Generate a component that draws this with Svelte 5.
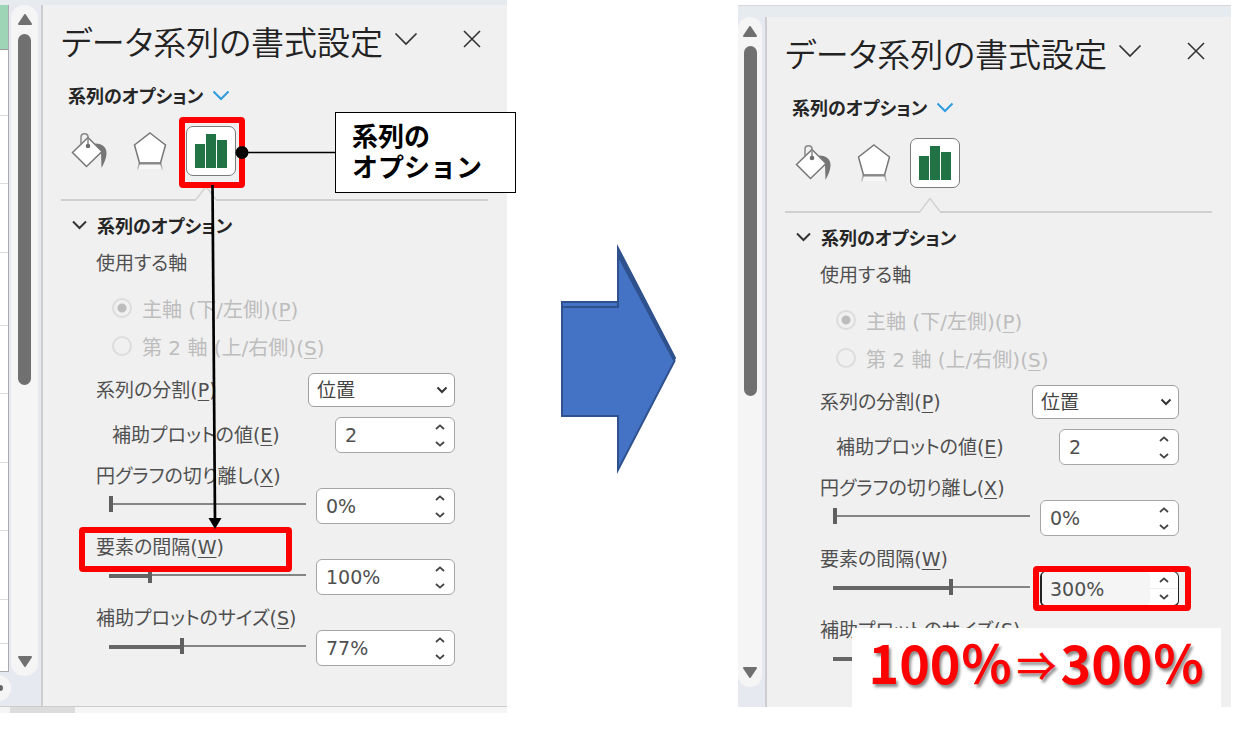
<script>
  const bands = [66, 68, 69, 73, 68, 69, 68, 69, 44, 28];

  const before = {
    id: 'before',
    sliders: [
      { name: '円グラフの切り離し', key: 'X', text: '0%', value: 0, min: 0, max: 400 },
      { name: '要素の間隔', key: 'W', text: '100%', value: 100, min: 0, max: 500, boxed: true },
      { name: '補助プロットのサイズ', key: 'S', text: '77%', value: 77, min: 5, max: 200 }
    ]
  };
  const after = {
    id: 'after',
    sliders: [
      { name: '円グラフの切り離し', key: 'X', text: '0%', value: 0, min: 0, max: 400 },
      { name: '要素の間隔', key: 'W', text: '300%', value: 300, min: 0, max: 500, active: true },
      { name: '補助プロットのサイズ', key: 'S', text: '77%', value: 77, min: 5, max: 200 }
    ]
  };
  const fill = (s) => ((s.value - s.min) / (s.max - s.min)) * 100;
</script>

{#snippet scrollbar()}
  <div class="scrollbar">
    <svg width="14" height="11" viewBox="0 0 14 11"><path d="M7 1 L13 10 H1 Z" fill="#707070" stroke="#707070" stroke-width="2" stroke-linejoin="round" /></svg>
    <div class="thumb"></div>
    <div class="rest"></div>
    <svg width="14" height="11" viewBox="0 0 14 11"><path d="M7 10 L13 1 H1 Z" fill="#707070" stroke="#707070" stroke-width="2" stroke-linejoin="round" /></svg>
  </div>
{/snippet}

{#snippet spinner(id, text, wide, active)}
  <div class="spin" class:wide class:active>
    <input {id} type="text" value={text} />
    <div class="steps">
      <button aria-label="増やす"><svg width="10" height="6" viewBox="0 0 10 6"><path d="M1 5 L5 1.4 L9 5" /></svg></button>
      <button aria-label="減らす"><svg width="10" height="6" viewBox="0 0 10 6"><path d="M1 1 L5 4.6 L9 1" /></svg></button>
    </div>
    {#if active}<span class="frame spin-frame"></span>{/if}
  </div>
{/snippet}

{#snippet pane(p)}
  <section class="pane">
    <header class="title">
      <h1>データ系列の書式設定</h1>
      <button aria-label="作業ウィンドウのオプション"><svg width="24" height="14" viewBox="0 0 24 14"><path d="M1.500 1.500 L12 12 L22.500 1.500" fill="none" stroke="#333" stroke-width="1.7" /></svg></button>
      <button class="close" aria-label="閉じる"><svg width="18" height="18" viewBox="0 0 18 18"><path d="M1 1 L17 17 M17 1 L1 17" fill="none" stroke="#333" stroke-width="1.6" /></svg></button>
    </header>

    <button class="scope">
      系列のオプション
      <svg width="18" height="11" viewBox="0 0 18 11"><path d="M1.500 1.500 L9 9 L16.500 1.500" fill="none" stroke="#2f9be0" stroke-width="2" /></svg>
    </button>

    <nav class="tabs">
      <button aria-label="塗りつぶしと線">
        <svg width="38" height="42" viewBox="0 0 38 42">
          <path d="M24 13.500 C32 13.500 36 18 35.500 24 C35.200 29 33 33 30.500 38 L30 22 Z" fill="#767676" />
          <path d="M1.500 22.500 L17 7.500 L31 21.500 L15.500 36.500 Z" fill="#fff" stroke="#777" stroke-width="1.5" />
          <path d="M10 15 V7 C10 2.500 17 2.500 17 7 V16" fill="none" stroke="#888" stroke-width="1.5" />
          <circle cx="17" cy="16" r="2.300" fill="#6d6d6d" />
        </svg>
      </button>
      <button aria-label="効果">
        <svg width="38" height="42" viewBox="0 0 38 42">
          <defs>
            <linearGradient id="fade-{p.id}" x1="0" y1="0" x2="0" y2="1">
              <stop offset="0" stop-color="#888" /><stop offset="1" stop-color="#ddd" />
            </linearGradient>
          </defs>
          <path d="M8.500 33 L6.500 40 M29.500 33 L31.500 40" stroke="url(#fade-{p.id})" stroke-width="1.5" />
          <path d="M9 34 H29 L30 39 H8 Z" fill="#f7f7f7" />
          <path d="M19 3 L34.500 15 L29.500 33 H8.500 L3.500 15 Z" fill="#fff" stroke="#777" stroke-width="1.5" />
          <path d="M8.500 33.500 H29.500" stroke="#888" stroke-width="2" />
        </svg>
      </button>
      <button class="current" aria-label="系列のオプション">
        <svg width="34" height="36" viewBox="0 0 34 36">
          <path d="M1 11 H11 V35 H1 Z M12 1 H22 V35 H12 Z M23 7 H33 V35 H23 Z" fill="#217346" />
        </svg>
        {#if p.id === 'before'}<span class="frame tab-frame"></span>{/if}
      </button>
    </nav>

    <div class="divider">
      <i class="lead"></i>
      <svg width="20" height="16" viewBox="0 0 20 16"><path d="M0 14.500 L10 1.500 L20 14.500" fill="none" stroke="#d2d2d2" stroke-width="1.5" /></svg>
      <i></i>
    </div>

    <button class="section">
      <svg width="15" height="10" viewBox="0 0 15 10"><path d="M1 1.500 L7.500 8 L14 1.500" fill="none" stroke="#333" stroke-width="2" /></svg>
      系列のオプション
    </button>

    <form>
      <fieldset disabled>
        <legend>使用する軸</legend>
        <label class="choice"><input type="radio" name="axis-{p.id}" checked /><span>主軸 (下/左側)(<u>P</u>)</span></label>
        <label class="choice"><input type="radio" name="axis-{p.id}" /><span>第 2 軸 (上/右側)(<u>S</u>)</span></label>
      </fieldset>

      <div class="row split">
        <label for="split-{p.id}">系列の分割(<u>P</u>)</label>
        <div class="pick">
          <select id="split-{p.id}"><option>位置</option></select>
          <svg width="12" height="8" viewBox="0 0 12 8"><path d="M1.500 1.500 L6 6 L10.500 1.500" /></svg>
        </div>
      </div>

      <div class="row plot">
        <label for="plot-{p.id}">補助プロットの値(<u>E</u>)</label>
        {@render spinner(`plot-${p.id}`, '2', false, false)}
      </div>

      {#each p.sliders as s}
        <div class="setting">
          <label for="{s.key}-{p.id}">{s.name}(<u>{s.key}</u>){#if s.boxed}<span class="frame label-frame"></span>{/if}</label>
          <div class="row">
            <input type="range" aria-label={s.name} min={s.min} max={s.max} value={s.value} style="--fill: {fill(s)}%" />
            {@render spinner(`${s.key}-${p.id}`, s.text, true, s.active)}
          </div>
        </div>
      {/each}
    </form>

    {#if p.id === 'before'}
      <svg class="pointer" width="300" height="384" viewBox="0 0 300 384">
        <path d="M12 6.500 H106" stroke="#000" stroke-width="1.3" />
        <circle cx="12" cy="6.500" r="6.500" fill="#000" />
        <path d="M-17.500 39 L-15 374" stroke="#000" stroke-width="2.700" />
        <path d="M-21.500 372 H-8.500 L-15 383 Z" fill="#000" />
      </svg>
      <p class="callout">系列の<br />オプション</p>
    {/if}
  </section>
{/snippet}

<main>
  <div class="shot left">
    <div class="ribbon"></div>
    <div class="body">
      <div class="edge">
        <div class="sheet">
          <div class="head"></div>
          {#each bands as h}<div class="cell" style="height: {h}px"></div>{/each}
        </div>
        <div class="knob"><i></i></div>
      </div>
      {@render scrollbar()}
      {@render pane(before)}
    </div>
    <div class="status"><i></i></div>
  </div>

  <div class="between">
    <svg width="118" height="232" viewBox="0 0 118 232">
      <g fill="#4472c4" stroke="#2f528f" stroke-width="2">
        <path d="M3 59 H59 V5 L116 115 L59 222 V172 H3 Z" stroke-miterlimit="8" />
        <path d="M3 64 H59 V12 L115.500 118 L59 227 V173 H3 Z" stroke-miterlimit="8" />
        <path d="M59 4 L116 114 L114 117 L59 14 Z" fill="#2f528f" stroke="none" />
      </g>
    </svg>
  </div>

  <div class="shot right">
    <div class="ribbon"></div>
    <div class="body">
      {@render scrollbar()}
      {@render pane(after)}
    </div>
    <p class="result">100％<span>⇒</span>300％</p>
  </div>
</main>

<style>
  :global(body) {
    margin: 0;
    background: #fff;
  }
  main {
    display: grid;
    grid-template-columns: 507fr 231fr 493fr;
    padding-right: 9px;
    align-items: start;
    font-family: 'DejaVu Sans', 'Noto Sans CJK JP', sans-serif;
    font-size: 19px;
    line-height: 24px;
    color: #505050;
    font-feature-settings: 'palt';
  }
  button, input, select {
    font: inherit;
    color: inherit;
    font-feature-settings: inherit;
    margin: 0;
    padding: 0;
    border: 0;
    background: none;
  }
  svg { display: block; flex: none; }
  u { text-underline-offset: 3px; text-decoration-thickness: 1px; }

  .shot { position: relative; background: #e6eaf0; min-width: 0; }
  .right { margin-top: 5px; }
  .ribbon { height: 5px; background: #e6ebf0; }
  .right .ribbon { height: 11px; border-top: 1px solid #d5d8dc; }
  .body { display: flex; align-items: stretch; }

  .edge { width: 11px; overflow: hidden; }
  .sheet { width: 8px; background: #fff; border-right: 1px solid #a9abae; }
  .head { height: 44px; background: #9fd5b7; border-bottom: 1px solid #999; }
  .cell { border-bottom: 1px solid #dcdcdc; box-sizing: border-box; }
  .cell:last-child { border-color: #a9abae; }
  .knob {
    width: 26px; height: 26px; margin: 3px 0 0 -15px;
    border-radius: 13px; background: #f5f5f5;
    display: flex; align-items: center; justify-content: flex-end;
  }
  .knob i { width: 6px; height: 6px; margin-right: 8px; border-radius: 3px; background: #666; }

  .scrollbar {
    width: 27px; box-sizing: border-box;
    margin: 0 3px 30px 0; padding: 9px 0;
    border-radius: 13px; background: #f5f5f5;
    display: flex; flex-direction: column; align-items: center;
  }
  .right .scrollbar { width: 24px; margin: 0 3px 20px 0; }
  .thumb { width: 13px; flex: 351; margin-top: 9px; border-radius: 7px; background: #707070; }
  .rest { flex: 271; }

  .pane {
    position: relative; flex: 1; min-width: 0;
    border-left: 2px solid #cbcdd0; background: #f0f0f0;
    padding-bottom: 40px;
  }
  .right .pane { padding-bottom: 29px; }

  .title { display: flex; align-items: center; height: 50px; padding: 11px 26px 1px 18px; }
  h1 {
    margin: 0; font-size: 33px; line-height: 50px; font-weight: 350; color: #222;
    font-family: 'Noto Sans CJK JP', sans-serif; white-space: nowrap;
  }
  .title button { margin-left: 11px; margin-bottom: 4px; }
  .title .close { margin-left: auto; }

  .scope, .section {
    display: flex; align-items: center;
    font-family: 'Noto Sans CJK JP', sans-serif;
    font-size: 18px; font-weight: 700; color: #262626;
  }
  .scope { height: 30px; margin: 13px 0 0 25px; gap: 9px; }
  .section { height: 28px; margin: 10px 0 0 29px; gap: 10px; }

  .tabs { display: flex; align-items: center; height: 50px; margin: 16px 0 0 28px; gap: 22px; }
  .tabs .current {
    position: relative; width: 50px; height: 50px; box-sizing: border-box;
    margin-left: -5px; border: 1px solid #7b7b7b; border-radius: 7px; background: #fff;
    display: flex; align-items: center; justify-content: center;
  }

  .divider { display: flex; align-items: flex-end; height: 16px; margin: 9px 19px 0 18px; }
  .divider i { flex: 1; height: 2px; background: #d0d0d0; }
  .divider .lead { flex: none; width: 135px; }

  form { margin: 10px 52px 0 53px; }
  fieldset { margin: 0; padding: 0; border: 0; }
  legend { padding: 0; line-height: 28px; margin-bottom: 14px; }
  .choice {
    display: flex; align-items: center; height: 38px; margin-left: 16px; gap: 10px;
    font-size: 20px; color: #bdbdbd;
  }
  .choice input {
    appearance: none; width: 20px; height: 20px; box-sizing: border-box;
    border: 2px solid #dcdcdc; border-radius: 10px; margin-bottom: 4px;
  }
  .choice input:checked { background: radial-gradient(circle, #bdbdbd 4px, transparent 5px); }

  .row { display: flex; align-items: center; justify-content: space-between; }
  .split { margin-top: 6px; }
  .plot { margin: 10px 0 0 16px; }
  label { white-space: nowrap; }

  .pick { position: relative; width: 147px; }
  select {
    appearance: none; display: block; width: 100%; height: 34px; box-sizing: border-box;
    padding-left: 8px; border: 1px solid #a0a0a0; border-radius: 6px; background: #fff; color: #444;
  }
  .pick svg { position: absolute; right: 7px; top: 13px; fill: none; stroke: #333; stroke-width: 2; pointer-events: none; }

  .spin {
    position: relative; display: flex; width: 120px; height: 36px; box-sizing: border-box;
    border: 1px solid #a6a6a6; border-radius: 6px; background: #fff;
  }
  .spin.wide { width: 139px; }
  .spin input { flex: 1; width: 0; padding-left: 9px; outline: none; }
  .steps { width: 28px; display: flex; flex-direction: column; }
  .steps button { flex: 1; display: flex; align-items: center; justify-content: center; }
  .steps path { fill: none; stroke: #444; stroke-width: 1.8; }
  .spin.active { border: 1px solid #222; border-left-width: 2px; border-bottom-width: 2px; }
  .active input { background: #f5f5f5; border-radius: 4px; padding-left: 8px; }
  .active .steps button:first-child { border-bottom: 1px solid #eee; }

  .setting { margin-top: 11px; }
  .setting > label { position: relative; display: table; height: 24px; }
  input[type='range'] {
    appearance: none; flex: 1; min-width: 0; height: 16px; margin: 0 10px 4px 13px;
    background:
      linear-gradient(#666, #666) 0 7px / var(--fill) 4px no-repeat,
      linear-gradient(#858585, #858585) 0 7px / 100% 2px no-repeat;
  }
  input[type='range']::-webkit-slider-runnable-track { height: 16px; }
  input[type='range']::-webkit-slider-thumb { appearance: none; width: 4px; height: 16px; background: #606060; }

  .frame { position: absolute; border: 6px solid #f00; border-radius: 4px; pointer-events: none; }
  .tab-frame { inset: -10px -10px -13px -8px; }
  .label-frame { inset: -8px -68px -13px -17px; }
  .spin-frame { inset: -6px -13px -6px -9px; }

  .pointer { position: absolute; left: 187px; top: 141px; overflow: visible; pointer-events: none; }
  .callout {
    position: absolute; left: 292px; top: 107px; width: 181px; height: 81px; box-sizing: border-box;
    margin: 0; padding: 6px 16px; border: 1px solid #000; background: #fff; color: #000;
    font: 700 26px/31px 'Noto Sans CJK JP', sans-serif; font-feature-settings: normal;
  }

  .status { height: 6px; border-top: 1px solid #ccc; background: #f5f5f5; }
  .status i { display: block; width: 65px; height: 6px; margin-left: 10px; background: #dcdcdc; }

  .between { display: flex; justify-content: center; padding: 243px 9px 0 0; }

  .result {
    position: absolute; right: 10px; bottom: 0; width: 369px; height: 79px; margin: 0;
    background: #fff; color: #f00; text-align: center; white-space: nowrap;
    font: 700 52px/68px 'Noto Sans CJK JP', sans-serif; font-feature-settings: normal;
    text-shadow: 2px 3px 3px rgba(0, 0, 0, 0.45);
  }
  .result span { font-size: 40px; font-weight: 500; padding: 0 4px; vertical-align: 3px; line-height: 1; }
</style>
